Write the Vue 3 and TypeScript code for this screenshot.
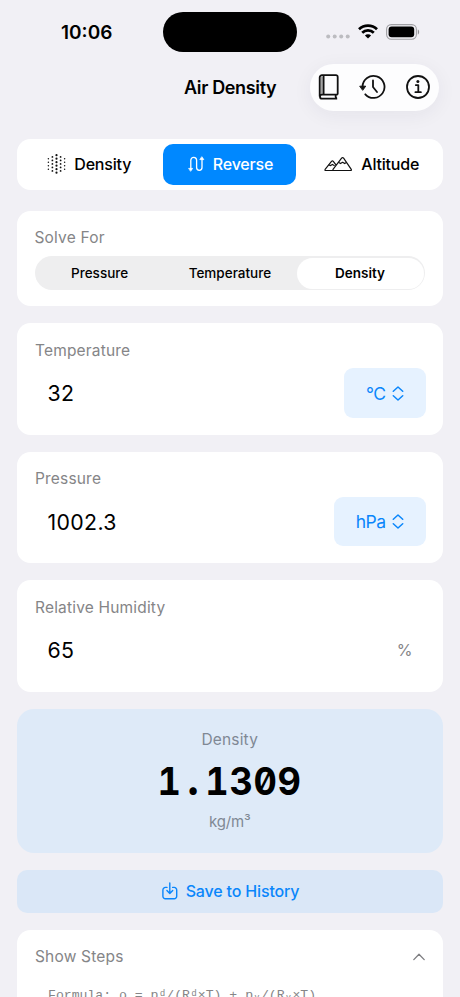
<script setup lang="ts">
import { ref } from 'vue'

interface Field {
  label: string
  value: string
  unit: string
  menu: boolean
}

const solveOptions: string[] = ['Pressure', 'Temperature', 'Density']
const solveFor = ref<string>('Density')

const fields: Field[] = [
  { label: 'Temperature', value: '32', unit: '°C', menu: true },
  { label: 'Pressure', value: '1002.3', unit: 'hPa', menu: true },
  { label: 'Relative Humidity', value: '65', unit: '%', menu: false },
]

// Columns of the particle icon: x, first y, dot count, radius
const columns = [
  { x: 1.4, y: 4.7, n: 4, r: 0.75 },
  { x: 5.4, y: 2.95, n: 5, r: 0.9 },
  { x: 9.5, y: 1.2, n: 6, r: 1.1 },
  { x: 13.6, y: 2.95, n: 5, r: 0.9 },
  { x: 17.6, y: 4.7, n: 4, r: 0.75 },
]
const dots = columns.flatMap((c) =>
  Array.from({ length: c.n }, (_, i) => ({ x: c.x, y: c.y + i * 3.5, r: c.r })),
)
</script>

<template>
  <div class="screen">
    <div class="status">
      <span class="time">10:06</span>
      <span class="island"></span>
      <div class="signals">
        <svg class="cell" width="24" height="5" viewBox="0 0 24 5" fill="#bcbcc0">
          <circle cx="2.2" cy="2.5" r="2" /><circle cx="8.7" cy="2.5" r="2" />
          <circle cx="15.2" cy="2.5" r="2" /><circle cx="21.7" cy="2.5" r="2" />
        </svg>
        <svg class="wifi" width="20" height="15" viewBox="0 0 20 15" fill="none" stroke="#000" stroke-width="2.7">
          <path d="M1 5.3a12.8 12.8 0 0 1 18 0" />
          <path d="M4.2 8.8a8.2 8.2 0 0 1 11.6 0" />
          <path d="M10 14.6 6.9 11.5a4.4 4.4 0 0 1 6.2 0z" fill="#000" stroke="none" />
        </svg>
        <svg width="34" height="16" viewBox="0 0 34 16">
          <rect x="0.6" y="0.6" width="29.8" height="14.6" rx="4.6" fill="none" stroke="#a0a0a4" stroke-width="1.1" />
          <rect x="2.6" y="2.5" width="25.6" height="10.8" rx="3" fill="#000" />
          <path d="M31.8 5.4c1.8.5 1.8 4.5 0 5z" fill="#909094" />
        </svg>
      </div>
    </div>

    <header class="nav">
      <h1>Air Density</h1>
      <div class="tools">
        <svg width="22" height="26" viewBox="0 0 22 26" fill="none" stroke="#111" stroke-width="1.8" stroke-linejoin="round">
          <path d="M3.7 2.5v17.8" stroke="#a4a4a4" stroke-width="2.2" />
          <path d="M1.7 22.6V3.5a2.3 2.3 0 0 1 2.3-2.3H18a1.7 1.7 0 0 1 1.7 1.7v16.7a1.2 1.2 0 0 1-1.2 1.1H4a2 2 0 0 0 0 4h15.2M5.6 1.2V20.7M17.7 20.7q-.6 2 .9 4" />
        </svg>
        <svg width="27" height="26" viewBox="0 0 27 26" fill="none" stroke="#111" stroke-width="1.8" stroke-linecap="round" stroke-linejoin="round">
          <path d="M3.5 12.7A11 11 0 1 1 6.3 20.3" />
          <path d="M1.1 12.2h5.6L3.9 16z" fill="#111" stroke-width="1" />
          <path d="M14 6.5V13l4 5" />
        </svg>
        <svg width="26" height="26" viewBox="0 0 26 26" fill="none" stroke="#111" stroke-width="1.8" stroke-linecap="round" stroke-linejoin="round">
          <circle cx="13" cy="13" r="11" />
          <path d="M10.8 11.1h2.5V18M10.4 18.2h5.5" />
          <circle cx="12.9" cy="7.6" r="1.5" fill="#111" stroke="none" />
        </svg>
      </div>
    </header>

    <main>
      <nav class="tabs">
        <button class="tab density">
          <svg width="19" height="20" viewBox="0 0 19 20" fill="#111">
            <circle v-for="(d, i) in dots" :key="i" :cx="d.x" :cy="d.y" :r="d.r" />
          </svg>
          <span>Density</span>
        </button>
        <button class="tab reverse active">
          <svg width="17" height="16" viewBox="0 0 17 16" fill="none" stroke="#fff" stroke-width="1.3" stroke-linecap="round" stroke-linejoin="round">
            <path d="M2.8 13V4.3a2.9 2.9 0 0 1 5.8 0v7.3a2.7 2.7 0 0 0 5.4 0V3" />
            <path d="M1 12.4h3.6L2.8 15zM12.2 3.6h3.6L14 1z" fill="#fff" stroke-width=".8" />
          </svg>
          <span>Reverse</span>
        </button>
        <button class="tab altitude">
          <svg width="29" height="16" viewBox="0 0 29 16" fill="none" stroke="#111" stroke-width="1.2" stroke-linejoin="round" stroke-linecap="round">
            <path d="M9.9 14.5H26.3q1.8 0 .8-1.4L19.6 2.2q-1-1.3-2 0L9.2 13.1q-.9 1.4.7 1.4H1.9q-1.6 0-.6-1.4L7.5 5.3q.9-1 1.8 0l2.3 3" />
            <path d="M14.8 6.6l1.7 1 2.1-1.3 2.1 1.3 1.7-1M5 9l1.6.6 1.8-1.2 1.8 1" />
          </svg>
          <span>Altitude</span>
        </button>
      </nav>

      <section class="card solve">
        <h2>Solve For</h2>
        <div class="segmented">
          <button v-for="o in solveOptions" :key="o" :class="{ on: o === solveFor }" @click="solveFor = o">
            {{ o }}
          </button>
        </div>
      </section>

      <section v-for="f in fields" :key="f.label" class="card field" :class="{ plain: !f.menu }">
        <h2>{{ f.label }}</h2>
        <div class="row">
          <span class="value">{{ f.value }}</span>
          <button v-if="f.menu" class="unit">
            <span>{{ f.unit }}</span>
            <svg width="12" height="15" viewBox="0 0 12 15" fill="none" stroke="#0a86fb" stroke-width="1.5" stroke-linecap="round" stroke-linejoin="round">
              <path d="M1.3 5.2 6 1l4.7 4.2M1.3 9.8 6 14l4.7-4.2" />
            </svg>
          </button>
          <span v-else class="percent">{{ f.unit }}</span>
        </div>
      </section>

      <section class="result">
        <h2>Density</h2>
        <strong>1<i>.</i>1309</strong>
        <span>kg/m³</span>
      </section>

      <button class="save">
        <svg width="16" height="18" viewBox="0 0 16 18" fill="none" stroke="#0a86fb" stroke-width="1.4" stroke-linecap="round" stroke-linejoin="round">
          <path d="M5 5.4H3.4A2.5 2.5 0 0 0 .9 7.9v6.4a2.5 2.5 0 0 0 2.5 2.5h8.8a2.5 2.5 0 0 0 2.5-2.5V7.9a2.5 2.5 0 0 0-2.5-2.5h-1.6M7.8.9v10.3M4.9 8.5l2.9 2.9 2.9-2.9" />
        </svg>
        <span>Save to History</span>
      </button>

      <section class="card steps">
        <div class="steps-head">
          <h2>Show Steps</h2>
          <svg width="12" height="8" viewBox="0 0 12 8" fill="none" stroke="#7d7d80" stroke-width="1.3" stroke-linecap="round" stroke-linejoin="round">
            <path d="M.8 6.6 6 1.2l5.2 5.4" />
          </svg>
        </div>
        <code>Formula: ρ = pᵈ/(Rᵈ×T) + pᵥ/(Rᵥ×T)</code>
      </section>
    </main>
  </div>
</template>

<style>
body {
  background: #f1f0f5;
}
</style>

<style scoped>
.screen {
  width: 460px;
  height: 997px;
  overflow: hidden;
  background: #f1f0f5;
  color: #000;
  font-family: Inter, sans-serif;
}
button {
  border: 0;
  padding: 0;
  background: none;
  color: inherit;
  font: inherit;
  letter-spacing: inherit;
}
svg {
  display: block;
  flex: none;
}
h1,
h2 {
  margin: 0;
}
.status {
  display: grid;
  grid-template-columns: 163px 134px 163px;
  align-items: center;
  height: 64px;
}
.time {
  padding-left: 61px;
  font-size: 19px;
  font-weight: 600;
  letter-spacing: 0;
}
.island {
  height: 40px;
  border-radius: 20px;
  background: #000;
}
.signals {
  display: flex;
  align-items: center;
  padding-left: 29px;
}
.cell {
  margin-top: 9px;
}
.wifi {
  margin: -1px 8px 0 8px;
}
.signals svg:last-child {
  margin-top: -1px;
}
.nav {
  display: flex;
  align-items: center;
  justify-content: space-between;
  height: 47px;
  padding: 0 21px 0 184px;
}
h1 {
  font-size: 18px;
  font-weight: 600;
  line-height: 22px;
  letter-spacing: -0.35px;
  white-space: nowrap;
}
.tools {
  display: flex;
  align-items: center;
  justify-content: space-between;
  width: 129px;
  height: 47px;
  padding: 0 8px;
  box-sizing: border-box;
  border-radius: 24px;
  background: #fdfdfe;
  box-shadow: 0 4px 20px rgba(40, 40, 70, 0.06);
}
.tools svg {
  margin-top: -1px;
}
main {
  display: flex;
  flex-direction: column;
  padding: 27.5px 17.5px 0 17px;
}
.tabs {
  display: grid;
  grid-template-columns: 133px 133px 133px;
  justify-content: space-between;
  align-items: center;
  height: 51.5px;
  padding: 0 5px;
  margin-bottom: 21px;
  box-sizing: border-box;
  border-radius: 13.5px;
  background: #fff;
}
.tab {
  display: flex;
  align-items: center;
  justify-content: center;
  gap: 8px;
  height: 41px;
  padding-left: 1.5px;
  box-sizing: border-box;
  border-radius: 10px;
  font-size: 16px;
  font-weight: 500;
  letter-spacing: -0.18px;
  white-space: nowrap;
}
.tab.active {
  background: #0088ff;
  color: #fff;
}
.card {
  border-radius: 13.5px;
  background: #fff;
  box-sizing: border-box;
  margin-bottom: 17px;
}
h2 {
  font-size: 15.5px;
  line-height: 20px;
  font-weight: 400;
  letter-spacing: 0.18px;
  color: #858587;
}
.solve {
  height: 95px;
  padding: 17px 17.5px 0;
}
.segmented {
  display: grid;
  grid-template-columns: 1fr 1fr 127px;
  height: 34px;
  margin-top: 8px;
  padding: 1.5px;
  box-sizing: border-box;
  border-radius: 17px;
  background: #eeeeef;
  font-size: 13.5px;
  font-weight: 500;
}
.segmented button:not(.on) {
  padding-right: 3px;
}
.segmented .on {
  border-radius: 16px;
  background: #fff;
  font-weight: 600;
}
.field {
  height: 111.7px;
  padding: 17.5px 17px 0 18px;
}
.row {
  display: flex;
  align-items: center;
  justify-content: space-between;
  height: 50px;
  margin-top: 7.5px;
  padding-left: 12.5px;
}
.plain .row {
  padding-right: 13px;
}
.value {
  font-size: 21.3px;
  letter-spacing: 0.35px;
}
.unit {
  display: flex;
  align-items: center;
  gap: 6px;
  height: 49.5px;
  padding: 0 22px;
  border-radius: 9px;
  background: #e6f2ff;
  color: #0a86fb;
  font-size: 17.5px;
  letter-spacing: -0.55px;
}
.percent {
  color: #858587;
  font-size: 16px;
}
.result {
  display: flex;
  flex-direction: column;
  align-items: center;
  height: 143.5px;
  padding-top: 21px;
  margin-bottom: 17.5px;
  box-sizing: border-box;
  border-radius: 17px;
  background: #deeaf8;
}
.result h2,
.result span {
  color: #7f8894;
}
.result strong {
  height: 46px;
  font-size: 38.5px;
  line-height: 46px;
  margin-top: 8px;
  font-weight: 700;
  font-feature-settings: 'tnum', 'zero';
  letter-spacing: 0.7px;
  transform: scaleX(0.94);
}
.result strong i {
  display: inline-block;
  width: 25.2px;
  font-size: 46px;
  line-height: 20px;
  font-style: normal;
  text-align: center;
}
.result span {
  margin-top: 8px;
  font-size: 15px;
  line-height: 20px;
  letter-spacing: -0.2px;
}
.save {
  display: flex;
  align-items: center;
  justify-content: center;
  gap: 8px;
  height: 42.5px;
  margin-bottom: 17.5px;
  padding-left: 1.5px;
  border-radius: 10px;
  background: #dae7f7;
  color: #0a86fb;
  font-size: 16px;
  font-weight: 500;
  letter-spacing: -0.16px;
}
.steps {
  height: 112px;
  padding: 17px 18px 0;
}
.steps-head {
  display: flex;
  align-items: center;
  justify-content: space-between;
}
code {
  display: block;
  padding: 20px 0 0 13px;
  font-family: 'Liberation Mono', 'DejaVu Sans Mono', monospace;
  font-size: 13.15px;
  line-height: 18px;
  color: #858587;
  white-space: pre;
}
</style>
